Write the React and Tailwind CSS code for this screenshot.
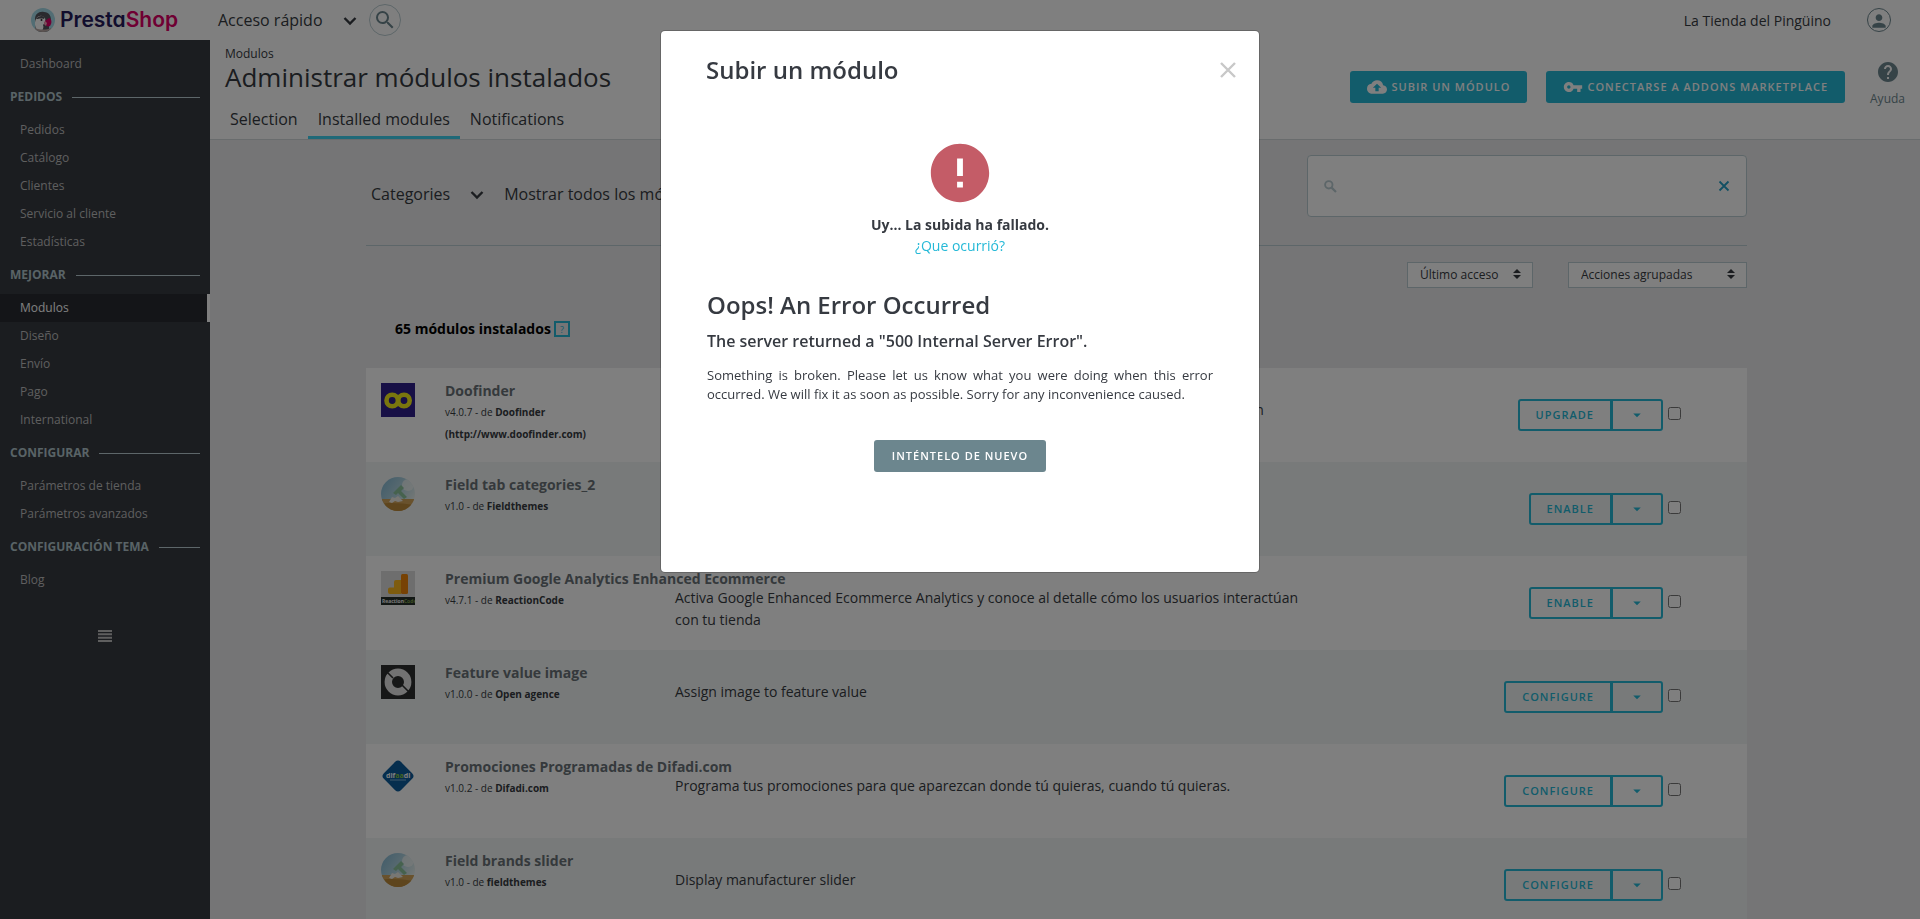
import React from "react";
import {
  MdCloudUpload,
  MdVpnKey,
  MdHelp,
  MdSearch,
  MdError,
  MdArrowDropDown,
  MdPerson,
} from "react-icons/md";

const menu = [
  { title: "PEDIDOS", items: ["Pedidos", "Catálogo", "Clientes", "Servicio al cliente", "Estadísticas"] },
  { title: "MEJORAR", items: ["Modulos", "Diseño", "Envío", "Pago", "International"] },
  { title: "CONFIGURAR", items: ["Parámetros de tienda", "Parámetros avanzados"] },
  { title: "CONFIGURACIÓN TEMA", items: ["Blog"] },
];

function Chevron() {
  return (
    <svg viewBox="0 0 20 20" className="size-5" aria-hidden="true">
      <path d="M4.500 8l5.500 5.500L15.500 8" fill="none" stroke="currentColor" strokeWidth="2.400" />
    </svg>
  );
}

function DoofinderLogo() {
  return (
    <svg viewBox="0 0 34 34" className="size-[34px]" aria-hidden="true">
      <rect width="34" height="34" fill="#30208c" />
      <g fill="none" stroke="#f4ec1c" strokeWidth="4.600">
        <circle cx="11.200" cy="17.500" r="5.700" />
        <circle cx="23" cy="17.500" r="5.700" />
      </g>
    </svg>
  );
}

function FieldLogo({ id }) {
  return (
    <svg viewBox="0 0 34 34" className="size-[34px]" aria-hidden="true">
      <defs>
        <clipPath id={id}>
          <circle cx="17" cy="17" r="17" />
        </clipPath>
        <linearGradient id={id + "-sky"} x1="0" y1="0" x2="1" y2="0.7">
          <stop offset="0" stopColor="#7fb6d2" />
          <stop offset="0.55" stopColor="#b4d6e2" />
          <stop offset="1" stopColor="#ecf2ee" />
        </linearGradient>
      </defs>
      <g clipPath={"url(#" + id + ")"}>
        <rect width="34" height="34" fill={"url(#" + id + "-sky)"} />
        <circle cx="27" cy="8" r="6" fill="#f4f6f4" opacity="0.7" />
        <rect y="22" width="34" height="12" fill="#d2a45a" />
        <path d="M0 27c8-2 20-1 34 1v7H0z" fill="#bd8a3a" />
        <path d="M12 16l8-8 3 3-3 3 6 6-3 2-6-6-2 2z" fill="#8cc49c" />
        <path d="M8 25l3-5 3 1 3-2 5 5-5 1-3-1-3 2z" fill="#f1eee6" />
      </g>
    </svg>
  );
}

function AnalyticsLogo() {
  return (
    <svg viewBox="0 0 34 34" className="size-[34px]" aria-hidden="true">
      <rect width="34" height="34" fill="#dcdcdc" />
      <path d="M7 18.500a2 2 0 0 1 2-2h4V11a2 2 0 0 1 2-2h5v14H9a2 2 0 0 1-2-2z" fill="#fcb81c" />
      <rect x="20" y="3" width="7" height="20" rx="1.500" fill="#ee8408" />
      <rect y="26" width="34" height="8" fill="#26302a" />
      <text x="1" y="32" fontSize="5" fontWeight="700" fontFamily="Open Sans, sans-serif" fill="#f2f2f2">
        Reaction<tspan fill="#7fa04c">Code</tspan>
      </text>
    </svg>
  );
}

function OpenLogo() {
  return (
    <svg viewBox="0 0 34 34" className="size-[34px]" aria-hidden="true">
      <rect width="34" height="34" fill="#2c2e2e" />
      <circle cx="17" cy="17" r="9.700" fill="none" stroke="#e4e4e4" strokeWidth="7.400" />
      <path d="M5 6l7 7M21 20l8 8" stroke="#2c2e2e" strokeWidth="1.600" />
    </svg>
  );
}

function DifadiLogo() {
  return (
    <svg viewBox="0 0 34 34" className="size-[34px]" aria-hidden="true">
      <rect x="5" y="5" width="24" height="24" rx="4" fill="#0c5c9c" transform="rotate(45 17 17)" />
      <text x="5" y="18.500" fontSize="7" fontWeight="700" fontFamily="Open Sans, sans-serif" fill="#ffffff">
        dif<tspan fill="#86c440">aa</tspan>di
      </text>
      <path d="M9 21h16" stroke="#7cb0d4" strokeWidth="1" />
    </svg>
  );
}

const modules = [
  {
    name: "Doofinder",
    version: "v4.0.7",
    author: "Doofinder",
    site: "(http://www.doofinder.com)",
    text: "Instala Doofinder en tu tienda sin esfuerzo y mejora tu buscador gracias a esta integración",
    action: "UPGRADE",
    logo: <DoofinderLogo />,
  },
  { name: "Field tab categories_2", version: "v1.0", author: "Fieldthemes", text: "", action: "ENABLE", logo: <FieldLogo id="field-tab" /> },
  {
    name: "Premium Google Analytics Enhanced Ecommerce",
    version: "v4.7.1",
    author: "ReactionCode",
    text: "Activa Google Enhanced Ecommerce Analytics y conoce al detalle cómo los usuarios interactúan con tu tienda",
    action: "ENABLE",
    logo: <AnalyticsLogo />,
  },
  { name: "Feature value image", version: "v1.0.0", author: "Open agence", text: "Assign image to feature value", action: "CONFIGURE", logo: <OpenLogo /> },
  {
    name: "Promociones Programadas de Difadi.com",
    version: "v1.0.2",
    author: "Difadi.com",
    text: "Programa tus promociones para que aparezcan donde tú quieras, cuando tú quieras.",
    action: "CONFIGURE",
    logo: <DifadiLogo />,
  },
  { name: "Field brands slider", version: "v1.0", author: "fieldthemes", text: "Display manufacturer slider", action: "CONFIGURE", logo: <FieldLogo id="field-brands" /> },
];

function Puffin() {
  return (
    <svg viewBox="0 0 24 24" className="size-6" aria-hidden="true">
      <defs>
        <clipPath id="puffin">
          <circle cx="12" cy="12" r="12" />
        </clipPath>
      </defs>
      <g clipPath="url(#puffin)">
        <rect width="24" height="24" fill="#a4dbe8" />
        <path d="M4 11c0-5 4-8 9-7 5 0 7 4 7 8l-2 4v8H5l-1-7z" fill="#54545c" />
        <path d="M5 11c2-4 7-4 9-1 1 3 0 5-2 7 1 2 0 4-1 6H7c-3-3-4-8-2-12z" fill="#ffffff" />
        <path d="M5 11c2-3 6-4 9-2l-1 2c-3-1-5 0-8 0z" fill="#54545c" />
        <path d="M14 13l4-3c3 1 3 5 1 8-2 1-4 0-6-2z" fill="#df0067" />
        <path d="M14 13l2 2-1 3-2-2z" fill="#f0a8b8" />
        <circle cx="10.500" cy="12" r="1" fill="#2a2a32" />
        <path d="M4 20c5 2 11 2 16 0v4H4z" fill="#b8a8a4" />
      </g>
    </svg>
  );
}

function TopBar() {
  return (
    <header className="flex h-10 items-center bg-white">
      <a href="#inicio" className="flex w-[210px] items-center gap-[5px] pl-[31px]">
        <Puffin />
        <span className="font-['Inter',sans-serif] text-[21px] leading-6 font-semibold text-[#251b5b] [font-feature-settings:'cv11']">
          Presta<span className="text-[#df0067]">Shop</span>
        </span>
      </a>
      <button className="ml-2 flex items-center gap-[17px] text-[16px]">
        Acceso rápido
        <Chevron />
      </button>
      <button aria-label="Buscar" className="ml-[9px] flex size-8 items-center justify-center rounded-full border border-[#bbcdd2] text-[#6c868e]">
        <MdSearch className="size-6" />
      </button>
      <a href="#tienda" className="ml-auto text-[14px]">La Tienda del Pingüino</a>
      <button aria-label="Cuenta" className="mr-[29px] ml-9 flex size-6 items-end justify-center overflow-hidden rounded-full border border-[#6c868e] text-[#6c868e]">
        <MdPerson className="size-5 shrink-0" />
      </button>
    </header>
  );
}

function MenuItem({ label, active }) {
  return (
    <a
      href={"#" + label}
      className={
        active
          ? "flex h-7 items-center border-r-[3px] border-white bg-[#282b30] pl-5 text-[12px] text-white"
          : "flex h-7 items-center pl-5 text-[12px] text-[#bebebe]"
      }
    >
      {label}
    </a>
  );
}

function Sidebar() {
  return (
    <nav className="w-[210px] shrink-0 bg-[#363a41] pt-2.5">
      <MenuItem label="Dashboard" />
      {menu.map((group) => (
        <section key={group.title}>
          <h2 className="flex h-[38px] items-center gap-2.5 px-2.5 text-[12px] font-bold whitespace-nowrap text-[#b3c7cd]">
            {group.title}
            <span className="h-px flex-1 bg-[#bbcdd2]" />
          </h2>
          {group.items.map((item) => (
            <MenuItem key={item} label={item} active={item === "Modulos"} />
          ))}
        </section>
      ))}
      <button aria-label="Contraer menú" className="mx-auto mt-9 block text-[#bebebe]">
        <svg viewBox="0 0 14 12" className="h-3 w-3.5" aria-hidden="true">
          <path d="M0 0h14v2H0zM0 3.300h14v2H0zM0 6.700h14v2H0zM0 10h14v2H0z" fill="currentColor" />
        </svg>
      </button>
    </nav>
  );
}

function PageHead() {
  return (
    <div className="flex h-[100px] justify-between border-b border-[#d3d8db] bg-white">
      <div className="flex flex-col">
        <p className="pt-[5px] pl-[15px] text-[12px] leading-[18px]">Modulos</p>
        <h1 className="pl-[15px] text-[26px] leading-[28px]">Administrar módulos instalados</h1>
        <div className="mt-auto flex pl-2.5 text-[16px] leading-6">
          <a href="#selection" className="px-2.5 pb-2">Selection</a>
          <a href="#installed" className="border-b-[3px] border-[#3ed2f0] px-2.5 pb-[5px]">Installed modules</a>
          <a href="#notifications" className="px-2.5 pb-2">Notifications</a>
        </div>
      </div>
      <div className="flex items-start">
        <button className="mt-[31px] flex h-8 items-center gap-1 rounded-[3px] bg-[#25b9d7] px-[17px] text-[11px] font-semibold tracking-[1px] text-white">
          <MdCloudUpload className="size-5" />
          SUBIR UN MÓDULO
        </button>
        <button className="mt-[31px] ml-[19px] flex h-8 items-center gap-1 rounded-[3px] bg-[#25b9d7] px-[17px] text-[11px] font-semibold tracking-[1px] text-white">
          <MdVpnKey className="size-5" />
          CONECTARSE A ADDONS MARKETPLACE
        </button>
        <a href="#ayuda" className="mt-5 mr-[15px] ml-[25px] flex flex-col items-center text-[12px] text-[#6c868e]">
          <MdHelp className="size-6" />
          <span className="mt-1.5">Ayuda</span>
        </a>
      </div>
    </div>
  );
}

function SelectBox({ label, wide }) {
  return (
    <div className={wide ? "relative w-[179px]" : "relative w-[126px]"}>
      <select aria-label={label} className="h-[26px] w-full appearance-none border border-[#bbcdd2] bg-white pl-3 text-[12px] text-[#363a41]">
        <option>{label}</option>
      </select>
      <svg viewBox="0 0 8 10" className="pointer-events-none absolute top-2 right-3 h-2.5 w-2" aria-hidden="true">
        <path d="M4 0l4 4H0zM4 10L0 6h8z" fill="#363a41" />
      </svg>
    </div>
  );
}

function ModuleRow({ item }) {
  return (
    <li className="flex h-[94px] items-start bg-white pl-[15px] even:bg-[#f1f5f4]">
      <div className="w-16 shrink-0 pt-[15px]">{item.logo}</div>
      <div className="w-[230px] shrink-0 pt-[13px]">
        <h3 className="text-[14px] leading-5 font-bold whitespace-nowrap text-[#6a7378]">{item.name}</h3>
        <p className="w-[170px] text-[10px] leading-[22px]">
          {item.version} - de <b>{item.author}</b> {item.site && <b>{item.site}</b>}
        </p>
      </div>
      <p className="max-w-[645px] flex-1 pt-[31px] text-[14px] leading-[22px]">{item.text}</p>
      <div className="mr-[66px] ml-auto flex pt-[31px]">
        <button className="h-8 rounded-l-[3px] border-2 border-[#25b9d7] px-4 text-[11px] font-semibold tracking-[1px] text-[#25b9d7]">
          {item.action}
        </button>
        <button aria-label={"Más acciones de " + item.name} className="-ml-px flex h-8 w-[52px] items-center justify-center rounded-r-[3px] border-2 border-[#25b9d7] text-[#25b9d7]">
          <MdArrowDropDown className="size-[18px]" />
        </button>
        <input type="checkbox" aria-label={"Seleccionar " + item.name} className="mt-2 ml-[5px] size-[13px]" />
      </div>
    </li>
  );
}

function Content() {
  return (
    <div className="pt-[15px] pr-[173px] pl-[156px]">
      <div className="flex justify-between border-b border-[#bbcdd2] pb-3">
        <div className="flex h-[78px] items-center pl-[5px] text-[16px]">
          <button className="flex items-center gap-[17px]">
            Categories
            <Chevron />
          </button>
          <button className="ml-[17px]">Mostrar todos los módulos</button>
        </div>
        <label className="flex h-[62px] w-[440px] items-center rounded border border-[#bbcdd2] bg-white px-4 text-[#bbcdd2]">
          <svg viewBox="0 0 13 13" className="size-[13px]" aria-hidden="true">
            <circle cx="4.800" cy="4.800" r="3.700" fill="none" stroke="currentColor" strokeWidth="1.900" />
            <path d="M7.600 7.600L12 12" stroke="currentColor" strokeWidth="2.200" />
          </svg>
          <input aria-label="Buscar módulos" className="min-w-0 flex-1 outline-none" />
          <button aria-label="Limpiar búsqueda" className="text-[#25a0c7]">
            <svg viewBox="0 0 12 12" className="size-3" aria-hidden="true">
              <path d="M1.500 1.500l9 9M10.500 1.500l-9 9" stroke="currentColor" strokeWidth="1.800" />
            </svg>
          </button>
        </label>
      </div>
      <div className="mt-[15px] flex justify-end gap-[35px]">
        <SelectBox label="Último acceso" />
        <SelectBox label="Acciones agrupadas" wide />
      </div>
      <div className="mt-[29px] flex items-center gap-[3px] pl-[29px] text-[14px] leading-6 font-bold text-black">
        65 módulos instalados
        <button aria-label="Información" className="flex size-4 items-center justify-center border-2 border-[#25b9d7] text-[9px] leading-none font-normal text-[#25b9d7]">
          ?
        </button>
      </div>
      <ul className="mt-[27px]">
        {modules.map((item) => (
          <ModuleRow key={item.name} item={item} />
        ))}
      </ul>
    </div>
  );
}

function UploadDialog() {
  return (
    <div className="fixed inset-0 flex items-start justify-center bg-black/50 pt-[31px]">
      <div role="dialog" aria-labelledby="upload-title" className="w-[598px] rounded bg-white px-[45px] pb-[100px] shadow-[0_0_0_1px_rgba(0,0,0,0.2)]">
        <div className="flex items-center justify-between pt-[23px]">
          <h2 id="upload-title" className="text-[24px] leading-8 font-semibold">Subir un módulo</h2>
          <button aria-label="Cerrar" className="-mr-[22px] text-[#c8c8c8]">
            <svg viewBox="0 0 16 16" className="size-4" aria-hidden="true">
              <path d="M1 1l14 14M15 1L1 15" stroke="currentColor" strokeWidth="2.400" />
            </svg>
          </button>
        </div>
        <div className="mt-[52px] flex flex-col items-center text-[14px] leading-[21px]">
          <MdError className="mb-1.5 size-[70px] text-[#c45c67]" />
          <p className="font-bold">Uy... La subida ha fallado.</p>
          <a href="#detalle" className="text-[#25b9d7]">¿Que ocurrió?</a>
        </div>
        <div className="mt-[33px] px-px">
          <h3 className="text-[24px] leading-8 font-semibold">Oops! An Error Occurred</h3>
          <h4 className="mt-2 text-[16px] leading-6 font-semibold">The server returned a "500 Internal Server Error".</h4>
          <p className="mt-[13px] text-justify text-[13px] leading-[19px]">
            Something is broken. Please let us know what you were doing when this error occurred. We will fix it as soon as possible. Sorry for any inconvenience caused.
          </p>
        </div>
        <button className="mx-auto mt-9 block h-8 rounded-[3px] bg-[#6c868e] px-[18px] text-[11px] font-semibold tracking-[1px] text-white">
          INTÉNTELO DE NUEVO
        </button>
      </div>
    </div>
  );
}

export default function App() {
  return (
    <div className="flex h-screen flex-col overflow-hidden bg-[#eaebec] font-['Open_Sans',sans-serif] text-[#363a41]">
      <TopBar />
      <div className="flex min-h-0 flex-1">
        <Sidebar />
        <main className="min-w-0 flex-1 overflow-hidden">
          <PageHead />
          <Content />
        </main>
      </div>
      <UploadDialog />
    </div>
  );
}
